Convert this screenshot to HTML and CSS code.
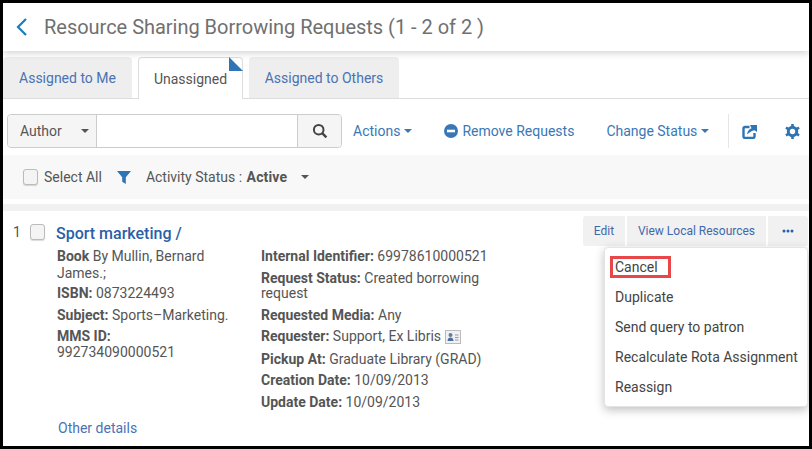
FILE: index.html
```html
<!DOCTYPE html>
<html lang="en">
<head>
<meta charset="utf-8">
<title>Resource Sharing Borrowing Requests</title>
<link rel="stylesheet" href="styles.css">
</head>
<body>
<div class="frame">
  <header class="titlebar">
    <svg class="back" width="13" height="20" viewBox="0 0 13 20"><path d="M11 2 3 10l8 8" fill="none" stroke="#1b7cb8" stroke-width="2.2"/></svg>
    <h1>Resource Sharing Borrowing Requests (1 - 2 of 2 )</h1>
  </header>
  <nav class="tabs">
    <a class="tab">Assigned to Me</a>
    <a class="tab active">Unassigned<span class="corner"></span></a>
    <a class="tab">Assigned to Others</a>
  </nav>
  <section class="toolbar">
    <div class="search">
      <div class="scope">Author<span class="caret dark"></span></div>
      <div class="field"></div>
      <div class="go"><svg width="16" height="16" viewBox="0 0 16 16"><circle cx="6.7" cy="6.7" r="4.8" fill="none" stroke="#444" stroke-width="2"/><path d="m10.2 10.2 4.2 4.2" stroke="#444" stroke-width="2.4"/></svg></div>
    </div>
    <a class="act act-actions">Actions<span class="caret blue"></span></a>
    <a class="act act-remove"><svg width="14" height="14" viewBox="0 0 14 14"><circle cx="7" cy="7" r="7" fill="#3a78b5"/><rect x="3" y="5.7" width="8" height="2.6" fill="#fff"/></svg>Remove Requests</a>
    <a class="act act-status">Change Status<span class="caret blue"></span></a>
    <span class="divider"></span>
    <svg class="ico-ext" width="15" height="15" viewBox="0 0 15 15"><path d="M7.500 3H3a1.500 1.500 0 0 0-1.500 1.500v8A1.500 1.500 0 0 0 3 14h8a1.500 1.500 0 0 0 1.500-1.500V9" fill="none" stroke="#2f74b5" stroke-width="2.400"/><path d="M5 10.500C5.500 7 7.500 4.800 9.500 4.300L8 1h7v7L12.300 6.300C10 6.800 7.500 8.500 5 10.500Z" fill="#2f74b5"/></svg>
    <svg class="ico-gear" width="15" height="15" viewBox="0 0 15 15"><circle cx="7.500" cy="7.500" r="4.200" fill="none" stroke="#2f74b5" stroke-width="3"/><g stroke="#2f74b5" stroke-width="2.600"><path d="M7.500 0v3M7.500 12v3M.9 3.700l2.600 1.500M11.500 9.800l2.600 1.500M.9 11.300l2.600-1.500M11.500 5.200l2.600-1.500"/></g></svg>
  </section>
  <section class="filters">
    <span class="check"></span>
    <span class="selall">Select All</span>
    <svg class="funnel" width="14" height="13" viewBox="0 0 14 13"><path d="M0 0h14L8.800 6.200V13L5.200 10.800V6.200Z" fill="#2f74b5"/></svg>
    <span class="status">Activity Status : <b>Active</b></span>
    <span class="caret dark status-caret"></span>
  </section>
  <div class="gap"></div>
  <section class="row">
    <div class="rownum">1</div>
    <span class="check row-check"></span>
    <div class="body">
      <a class="rtitle">Sport marketing /</a>
      <div class="cols">
        <div class="col col1">
          <p class="l1"><b>Book</b> By Mullin, Bernard James.;</p>
          <p class="l2"><b>ISBN:</b> 0873224493</p>
          <p class="l3"><b>Subject:</b> Sports–Marketing.</p>
          <p class="l4"><b>MMS ID:</b> 992734090000521</p>
        </div>
        <div class="col col2">
          <p class="m1"><b>Internal Identifier:</b> 69978610000521</p>
          <p class="m2"><b>Request Status:</b> Created borrowing request</p>
          <p class="m3"><b>Requested Media:</b> Any</p>
          <p class="m4"><b>Requester:</b> Support, Ex Libris <svg class="card" width="16" height="14" viewBox="0 0 16 14"><rect x=".5" y=".5" width="15" height="13" fill="#f1f1f1" stroke="#bbb"/><circle cx="5.500" cy="5" r="2" fill="#5b7fa8"/><path d="M2.500 11c0-2.500 1.500-3.500 3-3.500s3 1 3 3.500Z" fill="#4a6f9c"/><path d="M10 5h3.500M10 7.500h3.500M10 10h3.500" stroke="#999"/></svg></p>
          <p class="m5"><b>Pickup At:</b> Graduate Library (GRAD)</p>
          <p class="m6"><b>Creation Date:</b> 10/09/2013</p>
          <p class="m7"><b>Update Date:</b> 10/09/2013</p>
        </div>
      </div>
      <a class="other">Other details</a>
    </div>
    <div class="rowactions">
      <a class="btn">Edit</a>
      <a class="btn">View Local Resources</a>
      <a class="btn more"><svg width="12" height="4" viewBox="0 0 12 4"><circle cx="2" cy="2" r="1.500" fill="#2b5fa8"/><circle cx="6" cy="2" r="1.500" fill="#2b5fa8"/><circle cx="10" cy="2" r="1.500" fill="#2b5fa8"/></svg></a>
    </div>
    <ul class="menu">
      <li class="hl">Cancel</li>
      <li>Duplicate</li>
      <li>Send query to patron</li>
      <li>Recalculate Rota Assignment</li>
      <li>Reassign</li>
    </ul>
  </section>
</div>
</body>
</html>
```
FILE: styles.css
```css
* { box-sizing: border-box; }
html, body { margin: 0; padding: 0; background: #000; }
body { width: 812px; height: 449px; overflow: hidden; font-family: Roboto, "Liberation Sans", sans-serif; color: #555; }
p, ul, h1 { margin: 0; padding: 0; }
.frame { margin: 3px; width: 806px; height: 443px; background: #fff; overflow: hidden; display: flex; flex-direction: column; }

.titlebar { height: 48px; flex: none; display: flex; align-items: center; padding-left: 12px; background: #fff; box-shadow: 0 2px 7px rgba(0,0,0,.18); position: relative; z-index: 1; }
.back { flex: none; }
.titlebar h1 { margin-left: 16px; font-size: 20px; font-weight: 400; color: #707070; white-space: nowrap; letter-spacing: -.02px; }

.tabs { height: 48px; flex: none; display: flex; align-items: flex-start; padding-top: 6px; border-bottom: 1px solid #ddd; }
.tab { height: 41px; display: flex; align-items: center; justify-content: center; background: #eee; border-radius: 4px 4px 0 0; font-size: 14px; color: #4a72b5; }
.tab:nth-child(1) { width: 129px; }
.tab:nth-child(2) { width: 105px; margin: 0 6px; }
.tab:nth-child(3) { width: 150px; }
.tab.active { position: relative; height: 42px; background: #fff; border: 1px solid #ddd; border-bottom: 0; color: #555; }
.corner { position: absolute; top: -1px; right: -1px; border-bottom: 14px solid #2f74b5; border-right: 14px solid transparent; }

.toolbar { height: 56px; flex: none; display: flex; align-items: center; padding: 15px 0 7px 4px; }
.search { width: 335px; height: 34px; display: flex; border: 1px solid #ccc; border-radius: 4px; overflow: hidden; }
.scope { width: 89px; background: #f5f5f5; border-right: 1px solid #ccc; display: flex; align-items: center; padding-left: 12px; font-size: 14px; color: #555; position: relative; }
.scope .caret { position: absolute; left: 73px; top: 14px; }
.field { flex: 1; }
.go { width: 44px; background: #f5f5f5; border-left: 1px solid #ccc; display: flex; align-items: center; justify-content: center; }
.caret { display: inline-block; width: 0; height: 0; border-left: 4px solid transparent; border-right: 4px solid transparent; }
.caret.dark { border-top: 4px solid #555; }
.caret.blue { border-top: 4px solid #3a78b5; margin-left: 4px; vertical-align: 2px; }
.act { font-size: 14px; color: #3a78b5; white-space: nowrap; display: flex; align-items: center; }
.act-actions { margin-left: 11px; }
.act-remove { margin-left: 32px; gap: 4px; }
.act-status { margin-left: 32px; }
.divider { width: 1px; height: 34px; background: #e6e6e6; margin-left: 19px; }
.ico-ext { margin-left: 13px; }
.ico-gear { margin-left: 28px; }

.filters { height: 44px; flex: none; background: #f8f8f8; display: flex; align-items: center; padding-left: 20px; font-size: 14px; color: #555; }
.check { display: inline-block; width: 15px; height: 16px; border: 1px solid #bbb; border-radius: 3px; background: #f4f4f4; box-shadow: 0 1px 1px rgba(0,0,0,.15); flex: none; }
.selall { margin-left: 6px; }
.funnel { margin-left: 15px; }
.status { margin-left: 15px; }
.status b { font-weight: 700; margin-left: 1px; letter-spacing: .15px; }
.status-caret { margin-left: 14px; }
.gap { height: 7px; flex: none; margin-top: 5px; background: #f1f1f1; }

.row { flex: 1; position: relative; display: flex; font-size: 14px; color: #555; }
.rownum { width: 17px; margin-left: 10px; padding-top: 13px; font-size: 14px; line-height: 16px; flex: none; }
.row-check { margin-top: 13px; }
.body { margin-left: 11px; padding-top: 12px; flex: none; width: 470px; }
.rtitle { font-size: 16px; line-height: 21px; font-weight: 500; color: #2b5fa8; display: block; }
.cols { display: flex; margin-top: 5px; height: 181px; }
.col { line-height: 15px; }
.col b { font-weight: 700; }
.col1 { width: 204px; margin-left: 1px; margin-top: -1px; padding-right: 30px; }
.col2 { width: 250px; }
.l1 { line-height: 17px; }
.l4 { line-height: 16px; }
.l2 { margin-top: 4px; }
.l3 { margin-top: 7px; }
.l4 { margin-top: 5px; }
.m2 { margin-top: 7px; }
.m3 { margin-top: 7px; }
.m4 { margin-top: 6px; }
.m5 { margin-top: 8px; }
.m6 { margin-top: 6px; }
.m7 { margin-top: 7px; }
.card { vertical-align: -3px; }
.other { display: block; margin-left: 2px; margin-top: -10px; font-size: 14px; line-height: 16px; color: #4a72b5; }

.rowactions { position: absolute; top: 5px; right: 1px; display: flex; gap: 2px; }
.btn { height: 30px; background: #f1f1f1; display: flex; align-items: center; justify-content: center; font-size: 12px; color: #3f68ad; }
.btn:nth-child(1) { width: 42px; border-radius: 3px 0 0 3px; }
.btn:nth-child(2) { width: 139px; }
.btn.more { width: 40px; border-radius: 0 3px 3px 0; }

.menu { position: absolute; top: 36px; right: 1px; width: 204px; height: 160px; list-style: none; background: #fff; border-radius: 4px; border: 1px solid #e4e4e4; box-shadow: 0 3px 10px rgba(0,0,0,.25); padding-top: 4px; font-size: 14px; color: #444; }
.menu li { height: 30px; line-height: 30px; padding-left: 10px; white-space: nowrap; position: relative; }
.menu li.hl::after { content: ""; position: absolute; left: 5px; top: 4px; width: 55px; height: 16px; border: 3px solid #e8474a; }
```
